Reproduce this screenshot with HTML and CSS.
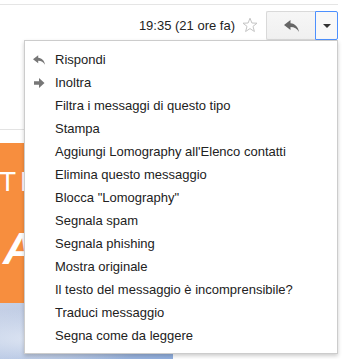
FILE: index.html
```html
<!DOCTYPE html>
<html lang="it">
<head>
    <meta charset="UTF-8">
    <meta name="viewport" content="width=device-width, initial-scale=1.0">
    <title>Messaggio - menu azioni</title>
    <link rel="stylesheet" href="styles.css">
</head>
<body>
    <div class="page">
        <div class="topline"></div>

        <div class="header">
            <span class="date">19:35 (21 ore fa)</span>
            <svg class="star" width="16" height="16" viewBox="0 0 16 16">
                <path d="M8 1.2 L9.9 6 L15 6.2 L11 9.4 L12.4 14.5 L8 11.6 L3.6 14.5 L5 9.4 L1 6.2 L6.1 6 Z" fill="none" stroke="#c4c4c4" stroke-width="1"/>
            </svg>
            <div class="btn-group">
                <button class="btn reply-btn">
                    <svg width="15" height="12" viewBox="0 0 15 12">
                        <path d="M6.5 0 L0 5 L6.5 10 V7 C10.5 7 13 8.4 15 12 C14.3 7 11.2 3.8 6.5 3.3 Z" fill="#666"/>
                    </svg>
                </button>
                <button class="btn more-btn">
                    <span class="caret"></span>
                </button>
            </div>
        </div>

        <div class="mail-body">
            <div class="divider"></div>
            <div class="banner">
                <div class="banner-orange">
                    <div class="banner-thin">TH</div>
                    <div class="banner-bold">A</div>
                </div>
                <div class="banner-sky"></div>
            </div>
        </div>

        <!-- dropdown menu -->
        <ul class="menu">
            <li>
                <svg class="menu-icon" width="12" height="10" viewBox="0 0 15 12">
                    <path d="M6.5 0 L0 5 L6.5 10 V7 C10.5 7 13 8.4 15 12 C14.3 7 11.2 3.8 6.5 3.3 Z" fill="#777"/>
                </svg>
                Rispondi
            </li>
            <li>
                <svg class="menu-icon" width="12" height="10" viewBox="0 0 12 10">
                    <path d="M1 3.2 H6 V0 L11.5 5 L6 10 V6.8 H1 Z" fill="#777"/>
                </svg>
                Inoltra
            </li>
            <li>Filtra i messaggi di questo tipo</li>
            <li>Stampa</li>
            <li>Aggiungi Lomography all'Elenco contatti</li>
            <li>Elimina questo messaggio</li>
            <li>Blocca "Lomography"</li>
            <li>Segnala spam</li>
            <li>Segnala phishing</li>
            <li>Mostra originale</li>
            <li>Il testo del messaggio è incomprensibile?</li>
            <li>Traduci messaggio</li>
            <li>Segna come da leggere</li>
        </ul>
    </div>
</body>
</html>
```

FILE: styles.css
```css
body {
    margin: 0;
    background: #fff;
    font-family: "Liberation Sans", Arial, sans-serif;
    font-size: 13px;
    color: #222;
    overflow: hidden;
}

.page {
    position: relative;
    width: 338px;
    height: 359px;
}

/* Header */
.topline {
    height: 4px;
    border-bottom: 1px solid #e5e5e5;
}

.header {
    display: flex;
    justify-content: flex-end;
    align-items: center;
    height: 29px;
    margin-top: 6px;
}

.date {
    color: #222;
    margin-right: 7px;
}

.star {
    margin-right: 8px;
    margin-top: -1px;
}

.btn-group {
    display: flex;
}

.btn {
    height: 29px;
    padding: 0;
    margin: 0;
    border: 1px solid #d9d9d9;
    background: linear-gradient(#f6f6f6, #f0f0f0);
    display: flex;
    align-items: center;
    justify-content: center;
}

.reply-btn {
    width: 49px;
    border-radius: 2px 0 0 2px;
    border-right: none;
}

.more-btn {
    width: 23px;
    border-color: #4d90fe;
    border-radius: 0 2px 2px 0;
    background: #f8f8f8;
}

.caret {
    width: 0;
    height: 0;
    border-left: 4px solid transparent;
    border-right: 4px solid transparent;
    border-top: 4px solid #333;
}

/* Mail body */
.mail-body {
    margin-top: 89px;
}

.divider {
    height: 1px;
    background: #e3e3e3;
}

.banner {
    width: 173px;
    margin-top: 13px;
}

.banner-orange {
    height: 160px;
    background: #f78e3e;
    color: #fff;
    overflow: hidden;
}

.banner-thin {
    font-size: 28px;
    letter-spacing: 4px;
    padding-top: 25px;
    line-height: 28px;
    margin-left: -1px;
}

.banner-bold {
    font-size: 45px;
    font-weight: bold;
    font-style: italic;
    line-height: 40px;
    margin-top: 33px;
    margin-left: 3px;
}

.banner-sky {
    height: 60px;
    background:
        radial-gradient(ellipse at 20% 60%, rgba(230, 236, 246, 0.8), transparent 60%),
        linear-gradient(to bottom right, #c7d1e6, #a9bde0 60%, #8eaee0);
}

/* Dropdown menu */
.menu {
    position: absolute;
    top: 40px;
    left: 24px;
    width: 312px;
    margin: 0;
    padding: 7px 0 6px;
    list-style: none;
    background: #fff;
    border: 1px solid rgba(0, 0, 0, 0.2);
    box-shadow: 0 2px 4px rgba(0, 0, 0, 0.2);
}

.menu li {
    position: relative;
    height: 23px;
    line-height: 23px;
    padding-left: 30px;
    color: #222;
    white-space: nowrap;
}

.menu-icon {
    position: absolute;
    left: 8px;
    top: 7px;
}
```
